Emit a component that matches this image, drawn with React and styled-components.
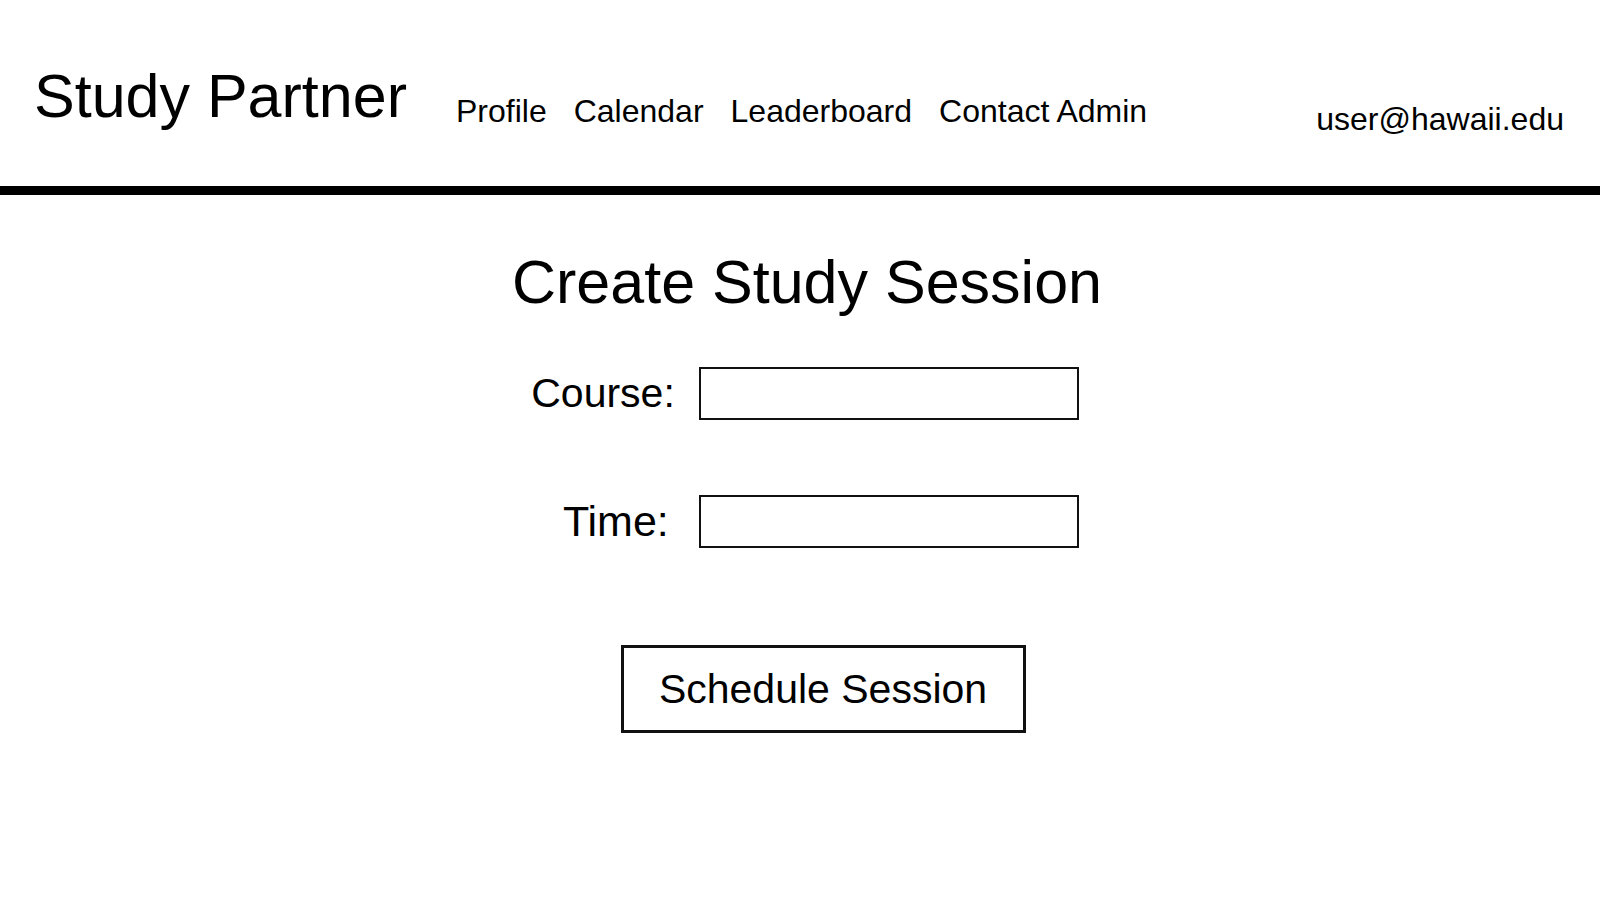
import React from 'react'
import styled, { createGlobalStyle } from 'styled-components'

const GlobalStyle = createGlobalStyle`
  body {
    margin: 0;
    background: #fff;
    color: #000;
    font-family: "Liberation Sans", Arial, sans-serif;
  }
  * { box-sizing: border-box; }
`

const Header = styled.header`
  display: flex;
  align-items: flex-start;
  height: 195px;
  padding: 61px 36px 0 34px;
  border-bottom: 9px solid #000;
`

const Brand = styled.div`
  font-size: 61px;
  white-space: nowrap;
`

const Nav = styled.nav`
  display: flex;
  gap: 27px;
  margin: 32px 0 0 49px;
`

const NavLink = styled.a`
  font-size: 32px;
  color: #000;
  text-decoration: none;
  white-space: nowrap;
`

const UserEmail = styled.div`
  margin: 40px 0 0 auto;
  font-size: 32px;
  white-space: nowrap;
`

const Main = styled.main`
  display: flex;
  flex-direction: column;
  align-items: center;
  padding: 52px 0 0 14px;
`

const Title = styled.h1`
  margin: 0;
  font-size: 61px;
  font-weight: normal;
`

const Form = styled.form`
  display: grid;
  grid-template-columns: auto 380px;
  column-gap: 24px;
  row-gap: 75px;
  align-items: center;
  margin: 50px 4px 0 0;
`

const Label = styled.label`
  justify-self: end;
  font-size: ${p => p.$size || 41}px;
  padding-right: ${p => p.$shift || 0}px;
`

const Field = styled.input`
  width: 380px;
  height: 53px;
  border: 2px solid #111;
  border-radius: 0;
  background: #fff;
  font: inherit;
  font-size: 24px;
  padding: 0 8px;
  outline: none;
`

const SubmitButton = styled.button`
  width: 405px;
  height: 88px;
  margin: 97px 0 0 32px;
  border: 3px solid #111;
  background: #fff;
  color: #000;
  font-family: inherit;
  font-size: 41px;
  padding: 0;
  cursor: pointer;
`

const links = ['Profile', 'Calendar', 'Leaderboard', 'Contact Admin']

export default function App() {
  return (
    <>
      <GlobalStyle />
      <Header>
        <Brand>Study Partner</Brand>
        <Nav>
          {links.map(l => (
            <NavLink key={l} href="#">{l}</NavLink>
          ))}
        </Nav>
        <UserEmail>user@hawaii.edu</UserEmail>
      </Header>
      <Main>
        <Title>Create Study Session</Title>
        <Form onSubmit={e => e.preventDefault()}>
          <Label htmlFor="course">Course:</Label>
          <Field id="course" type="text" />
          <Label htmlFor="time" $size={43} $shift={6}>Time:</Label>
          <Field id="time" type="text" />
        </Form>
        <SubmitButton type="button">Schedule Session</SubmitButton>
      </Main>
    </>
  )
}
